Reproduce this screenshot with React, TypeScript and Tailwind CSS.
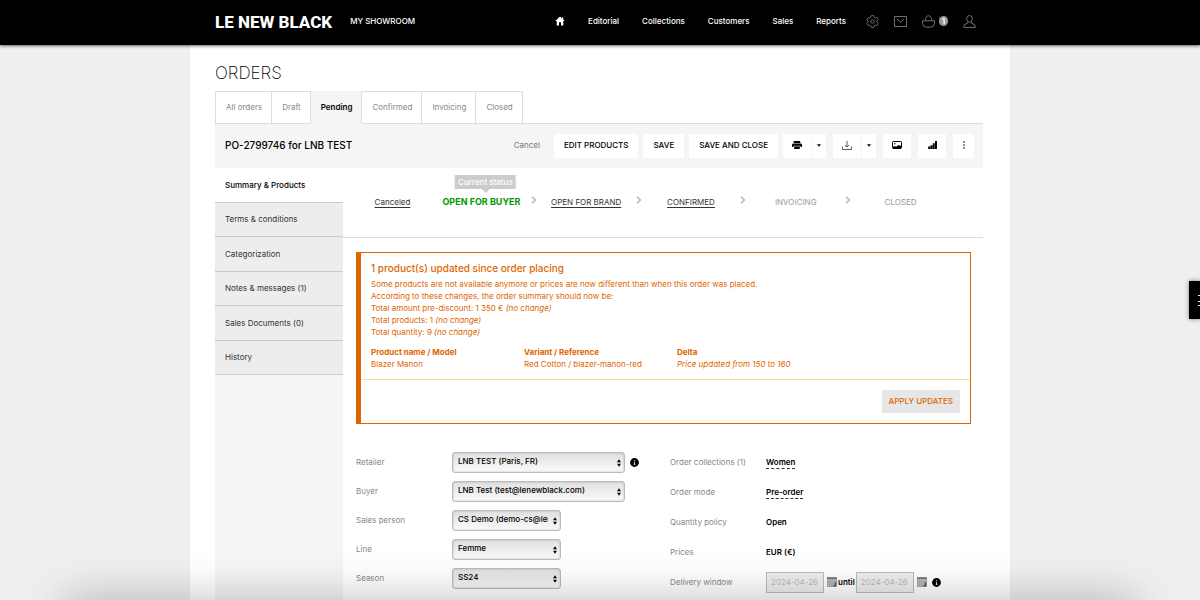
import React from 'react';
import { clsx } from 'clsx';

const mainNav = ['Editorial', 'Collections', 'Customers', 'Sales', 'Reports'];

const orderTabs = ['All orders', 'Draft', 'Pending', 'Confirmed', 'Invoicing', 'Closed'];

const sideItems = [
  'Summary & Products',
  'Terms & conditions',
  'Categorization',
  'Notes & messages (1)',
  'Sales Documents (0)',
  'History',
];

interface Step {
  label: string;
  state: 'current' | 'open' | 'locked';
}

const steps: Step[] = [
  { label: 'OPEN FOR BUYER', state: 'current' },
  { label: 'OPEN FOR BRAND', state: 'open' },
  { label: 'CONFIRMED', state: 'open' },
  { label: 'INVOICING', state: 'locked' },
  { label: 'CLOSED', state: 'locked' },
];

interface SelectField {
  id: string;
  label: string;
  value: string;
  wide?: boolean;
  info?: boolean;
}

const selectFields: SelectField[] = [
  { id: 'retailer', label: 'Retailer', value: 'LNB TEST (Paris, FR)', wide: true, info: true },
  { id: 'buyer', label: 'Buyer', value: 'LNB Test (test@lenewblack.com)', wide: true },
  { id: 'sales-person', label: 'Sales person', value: 'CS Demo (demo-cs@lenewblack.com)' },
  { id: 'line', label: 'Line', value: 'Femme' },
  { id: 'season', label: 'Season', value: 'SS24' },
];

const details = [
  { label: 'Order collections (1)', value: 'Women', hint: true },
  { label: 'Order mode', value: 'Pre-order', hint: true },
  { label: 'Quantity policy', value: 'Open' },
  { label: 'Prices', value: 'EUR (€)' },
];

function HomeIcon() {
  return (
    <svg viewBox="0 0 10 10" className="h-[10px] w-[10px] fill-current">
      <path d="M5 .6 .3 5.1h1.4v4.3h2.3V6.3h2v3.1h2.3V5.1h1.4L8.2 3.6V1.3H7v1.2z" />
    </svg>
  );
}

function GearIcon() {
  return (
    <svg viewBox="0 0 24 24" className="h-[13px] w-[13px] fill-none stroke-current" strokeWidth="1.7">
      <path d="M9.6 1.2h4.8l.7 3.2 2 1.2 3.1-1 2.4 4.2-2.4 2.1v2.3l2.4 2.1-2.4 4.2-3.1-1-2 1.2-.7 3.2H9.6l-.7-3.2-2-1.2-3.1 1-2.4-4.2 2.4-2.1v-2.3L1.4 8.8l2.4-4.2 3.1 1 2-1.2z" strokeLinejoin="round" />
      <circle cx="12" cy="12" r="3.2" />
    </svg>
  );
}

function MailIcon() {
  return (
    <svg viewBox="0 0 13 11" className="h-[11px] w-[13px] fill-none stroke-current">
      <path d="M.5.5h12v10H.5z" />
      <path d="m3 3.2 3.5 3 3.5-3" />
    </svg>
  );
}

function BasketIcon() {
  return (
    <svg viewBox="0 0 13 13" className="h-[13px] w-[13px] fill-none stroke-current">
      <path d="M.5 5.8h12v2.4a4 4 0 0 1-4 4h-4a4 4 0 0 1-4-4z" />
      <path d="M3.2 5.6C3.2 2.4 4.5.8 6.5.8s3.3 1.6 3.3 4.8" />
    </svg>
  );
}

function UserIcon() {
  return (
    <svg viewBox="0 0 13 13" className="h-[13px] w-[13px] fill-none stroke-current">
      <ellipse cx="6.5" cy="3.8" rx="2.9" ry="3.3" />
      <path d="M4.7 6.8v1.4L1.3 9.6.7 12.4h11.6l-.6-2.8-3.4-1.4V6.8" />
    </svg>
  );
}

function PrinterIcon() {
  return (
    <svg viewBox="0 0 10 8" className="h-2 w-[10px] fill-current">
      <path d="M2 0h5.6l.7.8v1.2H1.7V0z" />
      <path d="M1.6 2.5h6.8C9.4 2.5 10 3.2 10 4v1.9H8.5V4.7h-7v1.2H0V4c0-.8.6-1.5 1.6-1.5z" />
      <path d="M2.2 5.3h5.6V8H2.2z" />
    </svg>
  );
}

function DownloadIcon() {
  return (
    <svg viewBox="0 0 10 9" className="h-[9px] w-[10px] fill-none stroke-[#333]">
      <path d="M5 0v6M2.9 4 5 6.1 7.1 4M.5 5.6v2.9h9V5.6" strokeWidth=".8" />
    </svg>
  );
}

function PictureIcon() {
  return (
    <svg viewBox="0 0 10 8" className="h-2 w-[10px]">
      <rect x=".5" y=".5" width="9" height="7" rx=".8" className="fill-none stroke-current" />
      <path d="M1 7.2V6l1.6-1 1.4.8L6.6 4 9 5v2.2z" className="fill-current" />
      <circle cx="2.8" cy="2.7" r=".7" className="fill-current" />
    </svg>
  );
}

function ChartIcon() {
  return (
    <svg viewBox="0 0 9 8" className="h-2 w-[9px] fill-current">
      <path d="M.2 5.6h2V8h-2zM2.5 4.2h2V8h-2zM4.8 2.2h1.9V8H4.8zM7 0h2v8H7z" />
    </svg>
  );
}

function DotsIcon() {
  return (
    <svg viewBox="0 0 2 8" className="h-2 w-[2px] fill-current">
      <circle cx="1" cy="1" r=".8" />
      <circle cx="1" cy="4" r=".8" />
      <circle cx="1" cy="7" r=".8" />
    </svg>
  );
}

function CaretIcon() {
  return (
    <svg viewBox="0 0 4 3" className="h-[3px] w-1 fill-current">
      <path d="M0 .3h4L2 2.8z" />
    </svg>
  );
}

function InfoIcon() {
  return (
    <svg viewBox="0 0 9 9" className="h-[9px] w-[9px]">
      <circle cx="4.5" cy="4.5" r="4.4" fill="#000" />
      <path d="M4.2 1.9h1v1h-1zM3.7 3.7h1.4v2.7h.4V7H3.6v-.6H4v-2h-.3z" fill="#ccc" />
    </svg>
  );
}

function CalendarIcon() {
  return (
    <svg viewBox="0 0 10 10" className="h-[10px] w-[10px]">
      <rect x=".4" y=".5" width="9.2" height="9" fill="#e2e2e2" stroke="#777" strokeWidth=".6" />
      <path d="M.3.4h9.4v2H.3z" fill="#777" />
      <path d="M2.4 2.6v6.8M4.2 2.6v6.8M6 2.6v6.8M7.8 2.6v6.8M.4 4.3h9.2M.4 6.1h9.2M.4 7.9h9.2" stroke="#8c8c8c" strokeWidth=".6" />
      <path d="M6.4 7.9h1.4V5.2h1.4v4.3H6.4z" fill="#555" />
    </svg>
  );
}

function Header() {
  return (
    <header className="relative bg-black text-white shadow-[0_1px_3px_rgba(0,0,0,0.6)]">
      <div className="mx-auto flex h-[45px] w-full max-w-[820px] items-center pr-[27px] pb-[3px] pl-[25px]">
        <a href="#" className="pt-px font-['Roboto',sans-serif] text-[17px] leading-5 font-extrabold">LE NEW BLACK</a>
        <a href="#" className="ml-[18px] text-[8px] font-medium">MY SHOWROOM</a>
        <nav className="ml-auto flex items-center gap-[23px] text-[8px] font-medium">
          <a href="#" aria-label="Home"><HomeIcon /></a>
          {mainNav.map((item) => (
            <a key={item} href="#">{item}</a>
          ))}
        </nav>
        <div className="mr-[7px] ml-5 flex items-center gap-[15px] text-[#707070]">
          <button aria-label="Settings"><GearIcon /></button>
          <button aria-label="Messages"><MailIcon /></button>
          <button aria-label="Cart" className="flex items-center gap-1">
            <BasketIcon />
            <span className="flex h-[10px] w-[9px] items-center justify-center rounded-full bg-[#999] text-[8px] leading-none font-bold text-white">1</span>
          </button>
          <button aria-label="Account"><UserIcon /></button>
        </div>
      </div>
    </header>
  );
}

function OrderTabs() {
  return (
    <nav className="flex">
      <div className="relative z-10 -mb-px flex border-l border-[#ddd]">
        {orderTabs.map((tab) => (
          <a
            key={tab}
            href="#"
            className={clsx(
              'flex h-[33px] items-center border-t border-r border-b border-[#ddd] pr-[9px] pb-[2px] pl-[10px] text-[8px]',
              tab === 'Pending' ? 'border-y-[#f5f5f5] bg-[#f5f5f5] font-semibold text-black' : 'bg-white text-[#888]'
            )}
          >
            {tab}
          </a>
        ))}
      </div>
    </nav>
  );
}

function ActionBar() {
  const button = 'flex h-6 items-center justify-center bg-white pb-[2px] text-[8px] font-medium text-black';
  return (
    <div className="flex h-[45px] items-center border-t border-[#ddd] bg-[#f5f5f5] pr-[9px] pl-[10px]">
      <h2 className="pb-[2px] text-[10px] font-medium text-black">PO-2799746 for LNB TEST</h2>
      <div className="ml-auto flex items-center">
        <button className="mr-[14px] pb-[2px] text-[8px] text-[#777]">Cancel</button>
        <button className={clsx(button, 'mr-[5px] px-[10px]')}>EDIT PRODUCTS</button>
        <button className={clsx(button, 'mr-[5px] px-[10px]')}>SAVE</button>
        <button className={clsx(button, 'mr-[5px] px-[10px]')}>SAVE AND CLOSE</button>
        <div className="mr-[7px] flex gap-px">
          <button aria-label="Print" className={clsx(button, 'w-[28px]')}><PrinterIcon /></button>
          <button aria-label="Print options" className={clsx(button, 'w-[14px]')}><CaretIcon /></button>
        </div>
        <div className="mr-[7px] flex gap-px">
          <button aria-label="Download" className={clsx(button, 'w-[28px]')}><DownloadIcon /></button>
          <button aria-label="Download options" className={clsx(button, 'w-[14px]')}><CaretIcon /></button>
        </div>
        <button aria-label="Pictures" className={clsx(button, 'mr-[7px] w-[28px]')}><PictureIcon /></button>
        <button aria-label="Statistics" className={clsx(button, 'mr-[7px] w-[28px]')}><ChartIcon /></button>
        <button aria-label="More" className={clsx(button, 'w-[21px]')}><DotsIcon /></button>
      </div>
    </div>
  );
}

function Sidebar() {
  return (
    <aside className="w-[128px] shrink-0 bg-[#f5f5f5]">
      {sideItems.map((item, index) => (
        <a
          key={item}
          href="#"
          className={clsx(
            'flex items-center border-b border-[#ccc] px-[10px] pb-px text-[8px]',
            index % 2 === 0 ? 'h-[35px]' : 'h-[34px]',
            index === 0 ? 'bg-white font-medium text-black' : 'bg-[#ededed] text-[#333]'
          )}
        >
          {item}
        </a>
      ))}
    </aside>
  );
}

function StatusSteps() {
  return (
    <div className="flex h-[70px] items-center border-b border-[#ddd] pr-[30px] pb-px pl-[13px] text-[8px]">
      <div className="w-[73px] text-center">
        <a href="#" className="text-[#333] underline underline-offset-2">Canceled</a>
      </div>
      {steps.map((step, index) => (
        <div key={step.label} className="relative flex flex-1 items-center justify-center">
          {step.state === 'current' && (
            <>
              <span className="text-[9px] leading-3 font-bold text-[#090]">{step.label}</span>
              <span className="absolute bottom-full left-1/2 mb-[7px] ml-1 -translate-x-1/2 bg-[#ccc] px-[3px] leading-[14px] font-medium whitespace-nowrap text-white">
                Current status
                <span className="absolute top-full left-1/2 -ml-1 border-x-4 border-t-4 border-x-transparent border-t-[#ccc]" />
              </span>
            </>
          )}
          {step.state === 'open' && (
            <a href="#" className="text-[#333] underline underline-offset-2">{step.label}</a>
          )}
          {step.state === 'locked' && <span className="text-[#999]">{step.label}</span>}
          {index < steps.length - 1 && (
            <svg viewBox="0 0 6 8" className="absolute top-0 -right-[3px] h-2 w-[6px] fill-none stroke-[#bbb]" strokeWidth="1.7">
              <path d="m1 .8 3.4 3.2L1 7.2" />
            </svg>
          )}
        </div>
      ))}
    </div>
  );
}

function UpdateNotice() {
  return (
    <section className="mt-[14px] mr-3 ml-[13px] border border-l-[5px] border-[#dd6600] text-[#dd6600]">
      <div className="border-b border-[#ffdd99] px-[10px] pt-2 pb-[9px]">
        <h3 className="mb-[3px] text-[10px] leading-[14px] font-medium">1 product(s) updated since order placing</h3>
        <div className="text-[8px] leading-3">
          <p>Some products are not available anymore or prices are now different than when this order was placed.</p>
          <p>According to these changes, the order summary should now be:</p>
          <p>Total amount pre-discount: 1 350 € <em>(no change)</em></p>
          <p>Total products: 1 <em>(no change)</em></p>
          <p>Total quantity: 9 <em>(no change)</em></p>
        </div>
        <table className="mt-2 text-left text-[8px] leading-3">
          <thead>
            <tr>
              <th className="w-[153px] font-bold">Product name / Model</th>
              <th className="w-[153px] font-bold">Variant / Reference</th>
              <th className="w-[153px] font-bold">Delta</th>
            </tr>
          </thead>
          <tbody>
            <tr>
              <td>Blazer Manon</td>
              <td>Red Cotton / blazer-manon-red</td>
              <td className="italic">Price updated from 150 to 160</td>
            </tr>
          </tbody>
        </table>
      </div>
      <div className="flex justify-end p-[10px]">
        <button className="h-[23px] bg-[#e6e6e6] px-[7px] pb-[2px] text-[8px] font-medium">APPLY UPDATES</button>
      </div>
    </section>
  );
}

function SelectRow({ field }: { field: SelectField }) {
  return (
    <div className="flex h-5 items-center">
      <label htmlFor={field.id} className="w-24 text-[#888]">{field.label}</label>
      <div className={clsx('relative', field.wide ? 'w-[173px]' : 'w-[109px]')}>
        <select
          id={field.id}
          className="block h-[21px] w-full appearance-none rounded-[3px] border border-[#bbb] bg-linear-to-b from-[#e0e0e0] to-[#fafafa] pr-3 pb-[2px] pl-[5px] text-[8px] font-medium text-black shadow-[inset_0_0_2px_rgba(0,0,0,0.25)]"
        >
          <option>{field.value}</option>
        </select>
        <svg viewBox="0 0 4 8" className="pointer-events-none absolute top-[7px] right-[4px] h-2 w-1 fill-black">
          <path d="M2 .2 4 3.3H0zM2 7.8 0 4.7h4z" />
        </svg>
      </div>
      {field.info && <span className="ml-[5px]"><InfoIcon /></span>}
    </div>
  );
}

function DateInput({ label }: { label: string }) {
  return (
    <>
      <input
        aria-label={label}
        disabled
        defaultValue="2024-04-26"
        className="h-[21px] w-[58px] border border-[#bbb] bg-[#eee] px-1 text-[8px] text-[#bbb]"
      />
      <button aria-label={`Pick ${label}`} className="ml-[3px]"><CalendarIcon /></button>
    </>
  );
}

function OrderForm() {
  return (
    <div className="mx-[13px] mt-7 flex text-[8px]">
      <div className="flex w-[314px] flex-col gap-[9px]">
        {selectFields.map((field) => (
          <SelectRow key={field.id} field={field} />
        ))}
      </div>
      <div className="flex flex-col gap-[10px]">
        {details.map((row) => (
          <div key={row.label} className="flex h-5 items-center">
            <span className="w-24 text-[#888]">{row.label}</span>
            <span className={clsx('leading-3 font-semibold text-black', row.hint && 'border-b border-dashed border-[#333]')}>
              {row.value}
            </span>
          </div>
        ))}
        <div className="flex h-5 items-center">
          <span className="w-24 text-[#888]">Delivery window</span>
          <DateInput label="Delivery from" />
          <span className="mx-px font-semibold text-black">until</span>
          <DateInput label="Delivery until" />
          <span className="ml-[5px]"><InfoIcon /></span>
        </div>
      </div>
    </div>
  );
}

export default function App() {
  return (
    <div className="flex min-h-screen flex-col bg-[#efefef] font-['Inter',sans-serif]">
      <Header />
      <main className="mx-auto flex w-full max-w-[820px] flex-1 flex-col bg-white pt-[18px] pr-[27px] pl-[25px]">
        <h1 className="mb-2 text-[17px] leading-5 font-extralight text-black">ORDERS</h1>
        <OrderTabs />
        <ActionBar />
        <div className="flex flex-1">
          <Sidebar />
          <div className="flex-1 pb-1">
            <StatusSteps />
            <UpdateNotice />
            <OrderForm />
          </div>
        </div>
      </main>

      {/* Help drawer handle */}
      <button aria-label="Open help" className="fixed top-[281px] right-0 flex h-[38px] w-[11px] items-center justify-end bg-black shadow-[0_0_4px_rgba(0,0,0,0.5)]">
        <svg viewBox="0 0 2 14" className="h-[14px] w-[2px] stroke-white">
          <path d="M0 2.5h2M0 8.5h2M0 12.5h2" />
        </svg>
      </button>

      {/* Shade along the bottom edge of the window */}
      <div className="pointer-events-none fixed top-full right-[65px] left-[65px] h-10 shadow-[0_0_45px_rgba(0,0,0,0.28)]" />
    </div>
  );
}
